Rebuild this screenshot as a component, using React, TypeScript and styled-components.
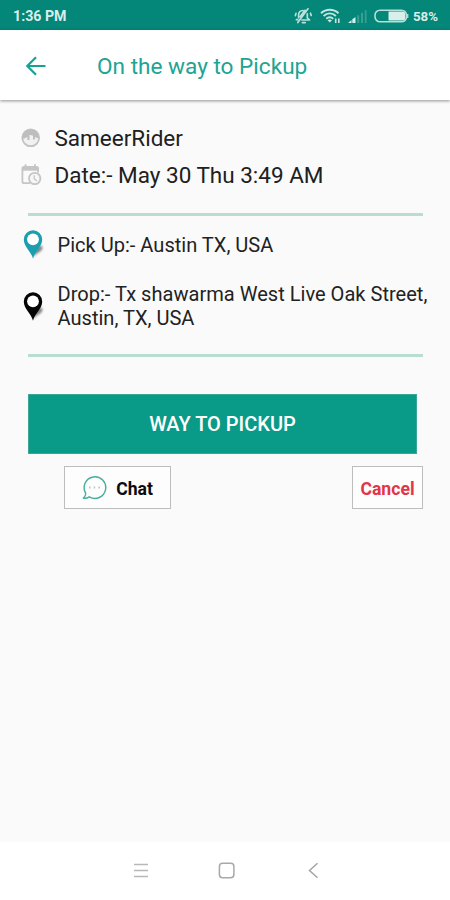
import React from "react";
import styled, { createGlobalStyle } from "styled-components";

const GlobalStyle = createGlobalStyle`
  * { box-sizing: border-box; }
  body { margin: 0; background: #fafafa; font-family: Roboto, "Liberation Sans", sans-serif; }
  button { font-family: inherit; padding: 0; cursor: pointer; }
  svg { display: block; flex-shrink: 0; }
`;

const Screen = styled.div`
  display: flex;
  flex-direction: column;
  width: 450px;
  height: 900px;
  background: #fafafa;
  overflow: hidden;
`;

const StatusBar = styled.div`
  display: flex;
  align-items: center;
  justify-content: space-between;
  height: 30px;
  padding: 2px 12px 0 13px;
  background: #048678;
  color: #d9eeeb;
`;

const StatusText = styled.span<{ $size: number }>`
  font-size: ${(p) => p.$size}px;
  font-weight: 700;
  white-space: nowrap;
`;

const StatusIcons = styled.div`
  display: flex;
  align-items: center;
`;

const StatusSlot = styled.span<{ $gap: number }>`
  display: flex;
  margin-right: ${(p) => p.$gap}px;
`;

const Header = styled.header`
  display: flex;
  align-items: center;
  height: 70px;
  padding: 1px 0 0 25px;
  background: #fff;
  box-shadow: 0 1px 3px rgba(0, 0, 0, 0.42);
  z-index: 1;
`;

const BackButton = styled.button`
  display: flex;
  width: 72px;
  border: 0;
  background: none;
`;

const Title = styled.h1`
  margin: 3px 0 0;
  font-size: 22.6px;
  font-weight: 400;
  line-height: 28px;
  color: #20a493;
  white-space: nowrap;
`;

const Content = styled.main`
  flex: 1;
  padding: 20px 23px 0 20px;
`;

const InfoRow = styled.div`
  display: flex;
  align-items: center;
  height: 37px;
  gap: 12.5px;
`;

const InfoText = styled.span`
  padding-bottom: 2px;
  font-size: 22.5px;
  line-height: 28px;
  color: #202020;
  white-space: nowrap;
`;

const Divider = styled.hr<{ $top?: number }>`
  height: 3px;
  margin: ${(p) => p.$top ?? 0}px 4px 0 8px;
  border: 0;
  background: #b9ddd2;
`;

const PlaceRow = styled.div<{ $top: number; $bottom: number }>`
  display: flex;
  align-items: center;
  gap: 13px;
  padding: ${(p) => p.$top}px 0 ${(p) => p.$bottom}px 1.5px;
`;

const PlaceText = styled.span`
  font-size: 20.07px;
  line-height: 24px;
  color: #222;
  white-space: nowrap;
`;

const PrimaryButton = styled.button`
  display: block;
  width: 389px;
  height: 60px;
  margin: 37px 0 0 8px;
  border: 1px solid #3aa795;
  background: #0a9b88;
  color: #fff;
  font-size: 20px;
  font-weight: 500;
`;

const Actions = styled.div`
  display: flex;
  justify-content: space-between;
  margin: 12px 4px 0 44px;
`;

const OutlineButton = styled.button<{ $width: number; $color: string }>`
  display: flex;
  align-items: center;
  justify-content: center;
  gap: 9px;
  width: ${(p) => p.$width}px;
  height: 43px;
  border: 1px solid #bdbdbd;
  background: #fdfdfd;
  color: ${(p) => p.$color};
  font-size: 17.6px;
  font-weight: 700;
`;

const ActionLabel = styled.span`
  padding-top: 3px;
  line-height: 20px;
`;

const NavBar = styled.nav`
  display: flex;
  justify-content: center;
  align-items: center;
  gap: 68px;
  height: 58px;
  padding-left: 3px;
  background: #fff;
`;

const MutedIcon = () => (
  <svg width="19" height="18" viewBox="0 0 19 18" fill="none" stroke="#b9e0dc" strokeWidth="1.7" strokeLinecap="round" strokeLinejoin="round">
    <path d="M4.600 10.800V8.200C4.600 5.300 6.600 3.600 9 3.500M13.300 6.800v4l2.300 2.200H8M8.400 15.600h2.800M14 1.800 3.800 15.500M11 3.300 6.300 9.600M2 6.400 1.400 8.600M2.400 12.700h1.200M16.500 6.200l.7 2.200" />
  </svg>
);

const WifiIcon = () => (
  <svg width="21" height="16" viewBox="0 0 21 16" fill="none" stroke="#c5e7e3" strokeWidth="1.9">
    <path d="M1 5.200C6.100.5 13.400.5 18.500 5.200M3.600 8c3.700-3.300 8.600-3.300 12.300 0M6.200 10.700c2.200-1.800 4.900-1.800 7.100 0" />
    <path d="m7.500 12.200 2.300 2.400 2.200-2.400c-1.300-1-3.200-1-4.500 0Z" fill="#c5e7e3" stroke="none" />
    <path d="M15.700 10.500V15M18.800 10.500V15" strokeWidth="1.6" />
  </svg>
);

const SignalIcon = () => (
  <svg width="20" height="14" viewBox="0 0 20 14">
    <path d="M0 14 3.500 11V14zM4.300 10.200 7.500 8v6H4.300z" fill="#d2eeea" />
    <path d="M9.200 6.200h2V14h-2zM13 3.700h2V14h-2zM16.800 1.200h1.700V14h-1.700z" fill="#38a093" />
  </svg>
);

const BatteryIcon = () => (
  <svg width="35" height="14" viewBox="0 0 35 14">
    <rect x="1" y="1.200" width="31.500" height="11.600" rx="5" fill="none" stroke="#b8dfda" strokeWidth="1.600" />
    <path d="M14.500 2.600h13.800q3 0 3 3v2.800q0 3-3 3H14.500z" fill="#d8efec" />
    <path d="M33.700 5v4" stroke="#b8dfda" strokeWidth="1.3" />
  </svg>
);

const BackArrow = () => (
  <svg width="22" height="22" viewBox="0 0 22 22" fill="none" stroke="#16a392" strokeWidth="2.2">
    <path d="M20.500 11H2.500M11 2.200 2.300 11l8.700 8.800" />
  </svg>
);

const FaceIcon = () => (
  <svg width="22" height="22" viewBox="0 0 22 22">
    <circle cx="10.700" cy="9.800" r="8.400" fill="#f1f1f1" stroke="#c3c3c3" strokeWidth="1.800" />
    <path d="M2.300 10.500C2 4.900 5.700 1.500 10.700 1.500s8.500 3.400 8.400 8.500c-1.800.2-3.200-.2-4.200-1.100v2.600h-1.900V7.700L9.500 6.700v5.300H7.400V8.700C6.400 9.900 4.600 10.600 2.300 10.500Z" fill="#bebebe" />
  </svg>
);

const CalendarClockIcon = () => (
  <svg width="22" height="24" viewBox="0 0 22 24" fill="none" stroke="#c5c5c5" strokeWidth="1.800">
    <path d="M10 19.200H4q-1.600 0-1.600-1.600V4.500q0-1.600 1.600-1.600h12.500q1.600 0 1.600 1.600v4" />
    <path d="M2.400 4.900h15.700" strokeWidth="3.600" />
    <path d="M5.500.3v4M15 .3v4" />
    <circle cx="14.700" cy="14.500" r="5.700" fill="#f7f7f7" />
    <path d="M14.200 11.200v3.500l2.700 2.200" strokeWidth="1.300" />
  </svg>
);

const PinIcon = ({ color, id }: { color: string; id: string }) => (
  <svg width="23" height="31" viewBox="0 -0.7 23 31">
    <defs>
      <filter id={id} x="-30%" y="-30%" width="160%" height="160%">
        <feGaussianBlur stdDeviation="0.8" />
      </filter>
    </defs>
    <path d="m11 27 2.300-6.800 4.200-4q3.200-1 3 1.800-.3 3-4.500 5Z" fill="#666" opacity=".8" filter={`url(#${id})`} />
    <path d="M11 29C9.400 22 1.800 17.200 1.800 9.800A9.200 9.200 0 0 1 11 .6a9.200 9.200 0 0 1 9.200 9.200C20.200 17.200 12.600 22 11 29Z" fill={color} />
    <circle cx="11" cy="9.600" r="5.900" fill="#fff" />
  </svg>
);

const ChatIcon = () => (
  <svg width="25" height="25" viewBox="0 0 25 25" fill="none" stroke="#43af99" strokeWidth="1.400" strokeLinejoin="round">
    <path d="M3.600 18A10.800 10.800 0 1 1 7.300 21.800C5.500 23 3.500 23.500 1.400 23.100 3.100 21.700 3.900 20.200 3.600 18Z" />
    <path d="M7 12.500h1.500M11.700 12.500h1.500M16.400 12.500h1.500" stroke="#b5c9c4" strokeWidth="1.900" />
  </svg>
);

const MenuIcon = () => (
  <svg width="18" height="18" viewBox="0 0 18 18" stroke="#b8b8b8" strokeWidth="1.500">
    <path d="M2 2.500h14M2 8.500h14M2 14.500h14" />
  </svg>
);

const HomeIcon = () => (
  <svg width="18" height="18" viewBox="0 0 18 18">
    <rect x="1.400" y="1.300" width="14.500" height="14.500" rx="3.200" fill="none" stroke="#a8a8a8" strokeWidth="1.500" />
  </svg>
);

const NavBackIcon = () => (
  <svg width="18" height="18" viewBox="0 0 18 18" fill="none" stroke="#a3a3a3" strokeWidth="1.500">
    <path d="m13.500 1.300-8 7.200 8 7.200" />
  </svg>
);

export default function App() {
  return (
    <>
      <GlobalStyle />
      <Screen>
        <StatusBar>
          <StatusText $size={14.2}>1:36 PM</StatusText>
          <StatusIcons>
            <StatusSlot $gap={7}><MutedIcon /></StatusSlot>
            <StatusSlot $gap={7}><WifiIcon /></StatusSlot>
            <StatusSlot $gap={6}><SignalIcon /></StatusSlot>
            <StatusSlot $gap={4}><BatteryIcon /></StatusSlot>
            <StatusText $size={13.3}>58%</StatusText>
          </StatusIcons>
        </StatusBar>
        <Header>
          <BackButton aria-label="Back"><BackArrow /></BackButton>
          <Title>On the way to Pickup</Title>
        </Header>
        <Content>
          <InfoRow>
            <FaceIcon />
            <InfoText>SameerRider</InfoText>
          </InfoRow>
          <InfoRow>
            <CalendarClockIcon />
            <InfoText>Date:- May 30 Thu 3:49 AM</InfoText>
          </InfoRow>
          <Divider $top={19} />
          <PlaceRow $top={13} $bottom={16}>
            <PinIcon color="#1b9eb0" id="pickup-shadow" />
            <PlaceText>Pick Up:- Austin TX, USA</PlaceText>
          </PlaceRow>
          <PlaceRow $top={6} $bottom={24}>
            <PinIcon color="#050505" id="drop-shadow" />
            <PlaceText>
              Drop:- Tx shawarma West Live Oak Street,
              <br />
              Austin, TX, USA
            </PlaceText>
          </PlaceRow>
          <Divider />
          <PrimaryButton>WAY TO PICKUP</PrimaryButton>
          <Actions>
            <OutlineButton $width={107} $color="#0c0c0c">
              <ChatIcon />
              <ActionLabel>Chat</ActionLabel>
            </OutlineButton>
            <OutlineButton $width={71} $color="#e23546">
              <ActionLabel>Cancel</ActionLabel>
            </OutlineButton>
          </Actions>
        </Content>
        <NavBar>
          <MenuIcon />
          <HomeIcon />
          <NavBackIcon />
        </NavBar>
      </Screen>
    </>
  );
}
